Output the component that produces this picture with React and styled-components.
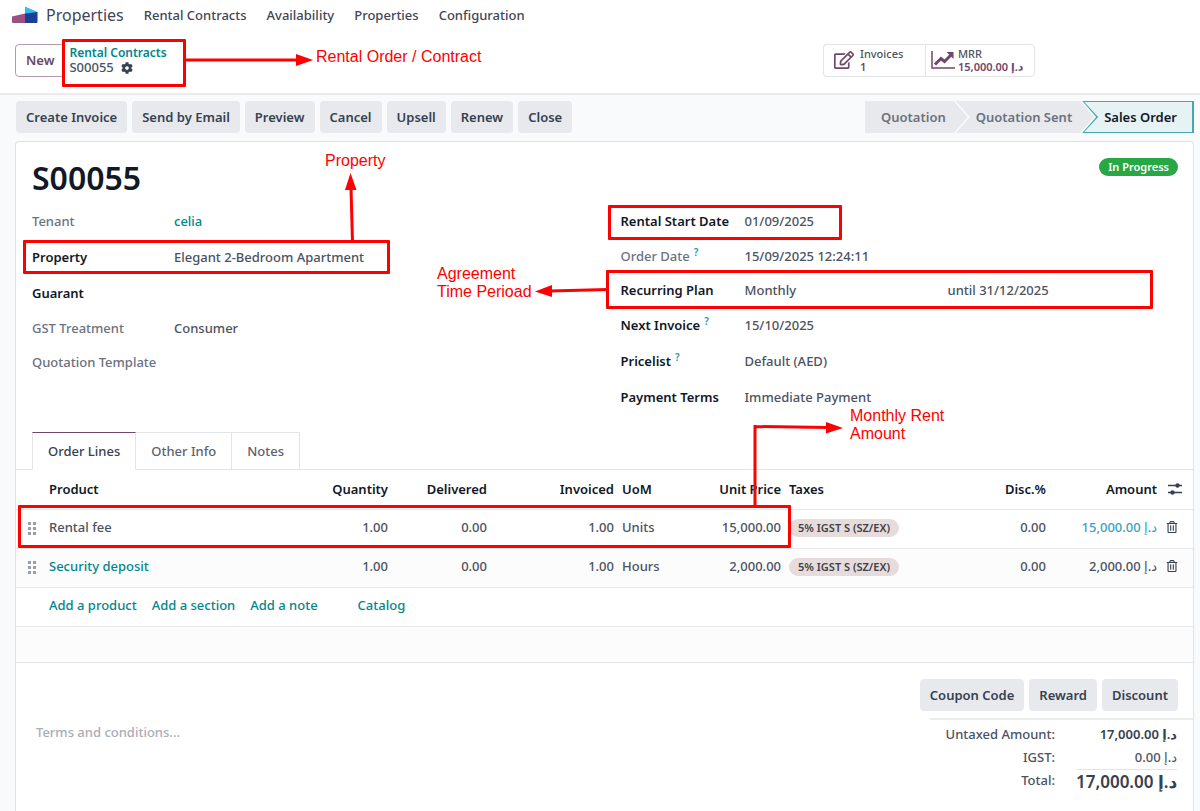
import React from "react";
import styled, { createGlobalStyle } from "styled-components";
import { FaCog, FaRegEdit, FaRegTrashAlt } from "react-icons/fa";

const GlobalStyle = createGlobalStyle`
  * {
    box-sizing: border-box;
  }

  body {
    margin: 0;
    background-color: #f9fafc;
    color: #4b5261;
    font-family: "Noto Sans", "DejaVu Sans", sans-serif;
    font-size: 13px;
    font-weight: 500;
    line-height: 18px;
  }

  button, textarea {
    font: inherit;
    color: inherit;
  }

  a {
    color: #01868c;
    text-decoration: none;
  }
`;

const Page = styled.div`
  position: relative;
  display: flex;
  flex-direction: column;
  min-height: 100vh;
`;

const NavBar = styled.nav`
  display: flex;
  align-items: center;
  gap: 20px;
  height: 30px;
  padding-left: 12px;
  background-color: white;

  a {
    color: #3f4655;
  }
`;

const Brand = styled.a`
  display: flex;
  align-items: center;
  gap: 8px;
  font-size: 16px;
  font-weight: 400;
`;

const ControlPanel = styled.header`
  display: flex;
  align-items: center;
  height: 65px;
  padding: 0 165px 3px 15px;
  background-color: white;
  border-bottom: 2px solid #ebebed;
`;

const NewButton = styled.button`
  height: 33px;
  padding: 0 10px;
  background-color: white;
  border: 1px solid #b49aab;
  border-radius: 4px;
  color: #6b4762;
  font-weight: 600;
`;

const Breadcrumb = styled.div`
  flex: 1;
  padding-left: 4px;
  line-height: 15px;

  a {
    display: block;
    font-size: 12px;
    font-weight: 600;
  }
`;

const Record = styled.div`
  display: flex;
  align-items: center;
  gap: 7px;

  svg {
    color: #374151;
  }
`;

const StatButtons = styled.div`
  display: flex;
`;

const StatButton = styled.button`
  display: flex;
  align-items: center;
  gap: ${props => props.$gap}px;
  width: ${props => props.$width}px;
  height: 33px;
  padding: 0 0 0 ${props => props.$indent}px;
  background-color: white;
  border: 1px solid #e2e4e8;
  border-radius: 0 4px 4px 0;
  font-size: 11px;
  line-height: 13px;
  text-align: left;
  white-space: nowrap;

  &:first-child {
    border-right: 0;
    border-radius: 4px 0 0 4px;
  }

  svg {
    color: #71466a;
  }

  strong {
    display: block;
    color: #71466a;
    font-weight: 600;
  }
`;

const StatusBar = styled.div`
  display: flex;
  justify-content: space-between;
  padding: 6px 6px 8px 16px;
`;

const ButtonGroup = styled.div`
  display: flex;
  gap: 5px;
`;

const GreyButton = styled.button`
  height: 32px;
  padding: 0 10px;
  background-color: #e7e9ed;
  border: 0;
  border-radius: 4px;
  color: #374151;
  font-weight: 600;
`;

const Steps = styled.div`
  display: flex;
`;

const Step = styled.button`
  height: 32px;
  padding: 0 22px 0 20px;
  background-color: #e7e9ed;
  border: 0;
  color: #6b7280;
  font-weight: 600;
  clip-path: polygon(
    0 0,
    calc(100% - 14px) 0,
    100% 50%,
    calc(100% - 14px) 100%,
    0 100%,
    14px 50%
  );

  & + & {
    margin-left: -12px;
  }

  &:first-child {
    padding-left: 16px;
    clip-path: polygon(
      0 0,
      calc(100% - 14px) 0,
      100% 50%,
      calc(100% - 14px) 100%,
      0 100%
    );
  }
`;

const CurrentStep = styled.button`
  display: flex;
  height: 32px;
  margin-left: -12px;
  padding: 1px 2px 1px 1px;
  background-color: #45a9ad;
  border: 0;
  color: #111827;
  font-weight: 600;
  clip-path: polygon(0 0, 100% 0, 100% 100%, 0 100%, 14px 50%);

  span {
    padding: 6px 15px 6px 21px;
    background-color: #e6f2f3;
    clip-path: polygon(1px 0, 100% 0, 100% 100%, 1px 100%, 15px 50%);
  }
`;

const Sheet = styled.main`
  flex: 1;
  margin: 0 6px 0 15px;
  background-color: white;
  border: 1px solid #dfe2e6;
  border-bottom: 0;
  border-radius: 4px 4px 0 0;
`;

const SheetHead = styled.div`
  display: flex;
  justify-content: space-between;
  align-items: flex-start;
  height: 61px;
  padding: 16px 15px 0 16px;
`;

const Title = styled.h1`
  margin: 0;
  color: #111827;
  font-size: 32px;
  line-height: 40px;
  font-weight: 600;
`;

const Badge = styled.span`
  padding: 0 9px;
  background-color: #28a745;
  border-radius: 9px;
  color: white;
  font-size: 11px;
  font-weight: 600;
`;

const Fields = styled.div`
  display: grid;
  grid-template-columns: 1fr 1fr;
  column-gap: 16px;
  padding-left: 16px;
`;

const FieldList = styled.dl`
  margin: 0;
`;

const Field = styled.div`
  display: grid;
  grid-template-columns: ${props => props.$labelWidth}px 1fr;
  align-items: center;
  height: ${props => (props.$tight ? 34 : 36)}px;

  dt {
    color: ${props => (props.$muted ? "#6b7280" : "#111827")};
    font-weight: ${props => (props.$muted ? 500 : 600)};
  }

  dd {
    display: flex;
    margin: 0;
  }

  sup {
    margin-left: 4px;
    color: #1f9bb0;
    font-size: 10px;
    font-weight: 600;
    line-height: 10px;
  }
`;

const PlanName = styled.span`
  width: 203px;
`;

const Tabs = styled.div`
  display: flex;
  height: 38px;
  margin-top: 17px;
  padding-left: 16px;
  border-bottom: 1px solid #e2e4e8;
`;

const Tab = styled.button`
  height: 38px;
  padding: 0 15px;
  background-color: white;
  border: 1px solid #e2e4e8;
  border-left-width: ${props => (props.$active ? 1 : 0)}px;
  border-top-color: ${props => (props.$active ? "#71466a" : "#e2e4e8")};
  border-bottom-color: ${props => (props.$active ? "white" : "#e2e4e8")};
  color: ${props => (props.$active ? "#374151" : "#5b6270")};
`;

const Lines = styled.table`
  width: 100%;
  table-layout: fixed;
  border-collapse: collapse;

  th,
  td {
    height: 39px;
    padding: 0 4px;
    border-bottom: 1px solid #e6e7ea;
    text-align: left;
    white-space: nowrap;
  }

  td {
    padding-bottom: 3px;
  }

  th {
    color: #111827;
    font-weight: 600;
  }

  tbody tr:nth-child(even) {
    background-color: #fcfcfd;
  }

  svg {
    display: block;
  }
`;

const HeadNumber = styled.th`
  && {
    text-align: right;
  }
`;

const Number = styled.td`
  && {
    color: ${props => (props.$link ? "#3b9fbe" : "inherit")};
    text-align: right;
  }
`;

const HandleCell = styled.td`
  && {
    padding: 0 0 0 12px;
  }
`;

const EmptyCell = styled.td`
  && {
    height: 36px;
  }
`;

const Tax = styled.span`
  display: inline-block;
  padding: 0 9px;
  background-color: #e6dcdc;
  border-radius: 9px;
  color: #3f4148;
  font-size: 11px;
  font-weight: 600;
`;

const IconButton = styled.button`
  display: block;
  padding: 0 0 0 1px;
  background: none;
  border: 0;
  color: #374151;
`;

const AddLinks = styled.div`
  display: flex;
  gap: 15px;

  a:last-child {
    margin-left: 25px;
  }
`;

const Bottom = styled.div`
  display: flex;
  justify-content: space-between;
  padding-top: 16px;
`;

const Terms = styled.textarea`
  width: 500px;
  height: 60px;
  margin-top: 44px;
  padding: 0 20px;
  border: 0;
  resize: none;

  &::placeholder {
    color: #a9adb5;
  }
`;

const Summary = styled.div`
  display: flex;
  flex-direction: column;
  align-items: flex-end;

  ${ButtonGroup} {
    padding-right: 15px;
  }
`;

const Totals = styled.dl`
  display: grid;
  grid-template-columns: 125px 101px;
  column-gap: 21px;
  margin: 7px 0 0;
  padding: 3px 16px 0 0;
  border-top: 2px solid #ebecee;
  text-align: right;

  dt,
  dd {
    margin: 0;
    line-height: 23px;
  }

  dd {
    white-space: nowrap;
  }
`;

const Untaxed = styled.dd`
  color: #374151;
  font-weight: 600;
`;

const GrandTotal = styled.dd`
  border-top: 1px solid #e2e4e8;
  color: #374151;
  font-size: 17px;
  font-weight: 600;
`;

const Overlay = styled.div`
  position: absolute;
  inset: 0;
  overflow: hidden;
  pointer-events: none;
`;

const Highlight = styled.div`
  position: absolute;
  left: ${props => props.$x}px;
  top: ${props => props.$y}px;
  width: ${props => props.$width}px;
  height: ${props => props.$height}px;
  border: 3px solid #fe0000;
  border-radius: 1px;
`;

const Note = styled.div`
  position: absolute;
  left: ${props => props.$x}px;
  top: ${props => props.$y}px;
  color: #fe0000;
  font-family: "Liberation Sans", sans-serif;
  font-size: 16px;
  font-weight: 400;
  white-space: pre-line;
`;

const Arrows = styled.svg`
  position: absolute;
  left: 0;
  top: 0;
`;

const Logo = () => (
  <svg width="26" height="18" viewBox="0 0 26 18" aria-hidden="true">
    <path d="M0 10.500L13 7.500V17H1a1 1 0 0 1-1-1z" fill="#985184" />
    <path d="M13 0.500L24.500 5.500a1.500 1.500 0 0 1 1 1.500L13 8z" fill="#2ebcfa" />
    <path d="M13 7.500L25.500 6V16a1 1 0 0 1-1 1H13z" fill="#1a3f94" />
  </svg>
);

const LineChart = () => (
  <svg width="24" height="20" viewBox="0 0 24 20" aria-hidden="true">
    <path d="M1 1V18H24" fill="none" stroke="currentColor" strokeWidth="1.500" />
    <path
      d="M4 14.500L10 8.500L13.500 11.500L20 5"
      fill="none"
      stroke="currentColor"
      strokeWidth="3"
    />
    <path d="M15.500 2H22.500V9z" fill="currentColor" />
  </svg>
);

const Sliders = () => (
  <svg width="16" height="12" viewBox="0 0 16 12" aria-hidden="true">
    <path d="M2 2.500H16M2 9.500H16" stroke="currentColor" strokeWidth="1.300" />
    <circle cx="11.500" cy="2.500" r="2.200" fill="currentColor" />
    <circle cx="6.500" cy="9.500" r="2.200" fill="currentColor" />
  </svg>
);

const DragHandle = () => (
  <svg width="8" height="13" viewBox="0 0 8 13" fill="#9a9fa9" aria-hidden="true">
    {[0, 5, 10].map(y => (
      <path key={y} d={`M0 ${y}h3v3h-3zM5 ${y}h3v3h-3z`} />
    ))}
  </svg>
);

const CURRENCY = "د.إ";

const tenantFields = [
  { label: "Tenant", value: <a href="#tenant">celia</a>, muted: true },
  { label: "Property", value: "Elegant 2-Bedroom Apartment" },
  { label: "Guarant", value: "" },
  { label: "GST Treatment", value: "Consumer", muted: true, tight: true },
  { label: "Quotation Template", value: "", muted: true, tight: true }
];

const planFields = [
  { label: "Rental Start Date", value: "01/09/2025" },
  {
    label: "Order Date",
    value: "15/09/2025 12:24:11",
    help: true,
    muted: true,
    tight: true
  },
  {
    label: "Recurring Plan",
    value: (
      <>
        <PlanName>Monthly</PlanName>
        <span>until 31/12/2025</span>
      </>
    ),
    tight: true
  },
  { label: "Next Invoice", value: "15/10/2025", help: true },
  { label: "Pricelist", value: "Default (AED)", help: true },
  { label: "Payment Terms", value: "Immediate Payment" }
];

const orderLines = [
  { product: "Rental fee", uom: "Units", price: "15,000.00", selected: true },
  { product: "Security deposit", uom: "Hours", price: "2,000.00" }
];

const actions = [
  "Create Invoice",
  "Send by Email",
  "Preview",
  "Cancel",
  "Upsell",
  "Renew",
  "Close"
];

const FieldGroup = ({ fields, labelWidth }) => (
  <FieldList>
    {fields.map(field => (
      <Field
        key={field.label}
        $labelWidth={labelWidth}
        $muted={field.muted}
        $tight={field.tight}
      >
        <dt>
          {field.label}
          {field.help && <sup>?</sup>}
        </dt>
        <dd>{field.value}</dd>
      </Field>
    ))}
  </FieldList>
);

const OrderLines = () => (
  <Lines>
    <colgroup>
      <col style={{ width: 29 }} />
      <col />
      <col style={{ width: 92 }} />
      <col style={{ width: 99 }} />
      <col style={{ width: 127 }} />
      <col style={{ width: 82 }} />
      <col style={{ width: 85 }} />
      <col style={{ width: 175 }} />
      <col style={{ width: 90 }} />
      <col style={{ width: 111 }} />
      <col style={{ width: 32 }} />
    </colgroup>
    <thead>
      <tr>
        <th />
        <th>Product</th>
        <HeadNumber>Quantity</HeadNumber>
        <HeadNumber>Delivered</HeadNumber>
        <HeadNumber>Invoiced</HeadNumber>
        <th>UoM</th>
        <HeadNumber>Unit Price</HeadNumber>
        <th>Taxes</th>
        <HeadNumber>Disc.%</HeadNumber>
        <HeadNumber>Amount</HeadNumber>
        <th>
          <IconButton aria-label="Optional columns">
            <Sliders />
          </IconButton>
        </th>
      </tr>
    </thead>
    <tbody>
      {orderLines.map(line => (
        <tr key={line.product}>
          <HandleCell>
            <DragHandle />
          </HandleCell>
          <td>
            {line.selected ? line.product : <a href="#product">{line.product}</a>}
          </td>
          <Number>1.00</Number>
          <Number>0.00</Number>
          <Number>1.00</Number>
          <td>{line.uom}</td>
          <Number>{line.price}</Number>
          <td>
            <Tax>5% IGST S (SZ/EX)</Tax>
          </td>
          <Number>0.00</Number>
          <Number $link={line.selected}>
            {line.price} {CURRENCY}
          </Number>
          <td>
            <IconButton aria-label="Delete row">
              <FaRegTrashAlt size={12} />
            </IconButton>
          </td>
        </tr>
      ))}
      <tr>
        <td />
        <td colSpan="10">
          <AddLinks>
            <a href="#product">Add a product</a>
            <a href="#section">Add a section</a>
            <a href="#note">Add a note</a>
            <a href="#catalog">Catalog</a>
          </AddLinks>
        </td>
      </tr>
      <tr>
        <EmptyCell colSpan="11" />
      </tr>
    </tbody>
  </Lines>
);

const Annotations = () => (
  <Overlay>
    <Highlight $x={62} $y={39} $width={124} $height={48} />
    <Highlight $x={23} $y={240} $width={367} $height={34} />
    <Highlight $x={608} $y={205} $width={234} $height={35} />
    <Highlight $x={606} $y={270} $width={547} $height={39} />
    <Highlight $x={18} $y={505} $width={773} $height={43} />
    <Arrows width="1200" height="560" aria-hidden="true">
      <g fill="none" stroke="#fe0000" strokeWidth="3">
        <path d="M184 60H298" />
        <path d="M352.500 242L351 188" />
        <path d="M608 289.500L550 291" />
        <path d="M755 508V425M754 426.500L828 427.500" />
      </g>
      <g fill="#fe0000">
        <path d="M296 54L313 60L296 66z" />
        <path d="M345 190L350.500 173L356.500 190z" />
        <path d="M552 285L535 291.500L552 297z" />
        <path d="M826 422L843 428L826 433.500z" />
      </g>
    </Arrows>
    <Note $x={316} $y={48}>Rental Order / Contract</Note>
    <Note $x={325} $y={152}>Property</Note>
    <Note $x={437} $y={265}>{"Agreement\nTime Perioad"}</Note>
    <Note $x={850} $y={407}>{"Monthly Rent\nAmount"}</Note>
  </Overlay>
);

const App = () => (
  <>
    <GlobalStyle />
    <Page>
      <NavBar>
        <Brand href="#home">
          <Logo />
          Properties
        </Brand>
        <a href="#contracts">Rental Contracts</a>
        <a href="#availability">Availability</a>
        <a href="#properties">Properties</a>
        <a href="#configuration">Configuration</a>
      </NavBar>
      <ControlPanel>
        <NewButton>New</NewButton>
        <Breadcrumb>
          <a href="#contracts">Rental Contracts</a>
          <Record>
            S00055 <FaCog size={12} />
          </Record>
        </Breadcrumb>
        <StatButtons>
          <StatButton $width={102} $indent={10} $gap={6}>
            <FaRegEdit size={20} />
            <span>
              Invoices
              <strong>1</strong>
            </span>
          </StatButton>
          <StatButton $width={110} $indent={5} $gap={3}>
            <LineChart />
            <span>
              MRR
              <strong>15,000.00 {CURRENCY}</strong>
            </span>
          </StatButton>
        </StatButtons>
      </ControlPanel>
      <StatusBar>
        <ButtonGroup>
          {actions.map(action => (
            <GreyButton key={action}>{action}</GreyButton>
          ))}
        </ButtonGroup>
        <Steps>
          <Step>Quotation</Step>
          <Step>Quotation Sent</Step>
          <CurrentStep>
            <span>Sales Order</span>
          </CurrentStep>
        </Steps>
      </StatusBar>
      <Sheet>
        <SheetHead>
          <Title>S00055</Title>
          <Badge>In Progress</Badge>
        </SheetHead>
        <Fields>
          <FieldGroup fields={tenantFields} labelWidth={142} />
          <FieldGroup fields={planFields} labelWidth={124} />
        </Fields>
        <Tabs>
          <Tab $active>Order Lines</Tab>
          <Tab>Other Info</Tab>
          <Tab>Notes</Tab>
        </Tabs>
        <OrderLines />
        <Bottom>
          <Terms
            aria-label="Terms and conditions"
            placeholder="Terms and conditions..."
          />
          <Summary>
            <ButtonGroup>
              <GreyButton>Coupon Code</GreyButton>
              <GreyButton>Reward</GreyButton>
              <GreyButton>Discount</GreyButton>
            </ButtonGroup>
            <Totals>
              <dt>Untaxed Amount:</dt>
              <Untaxed>17,000.00 {CURRENCY}</Untaxed>
              <dt>IGST:</dt>
              <dd>0.00 {CURRENCY}</dd>
              <dt>Total:</dt>
              <GrandTotal>17,000.00 {CURRENCY}</GrandTotal>
            </Totals>
          </Summary>
        </Bottom>
      </Sheet>
      <Annotations />
    </Page>
  </>
);

export default App;
